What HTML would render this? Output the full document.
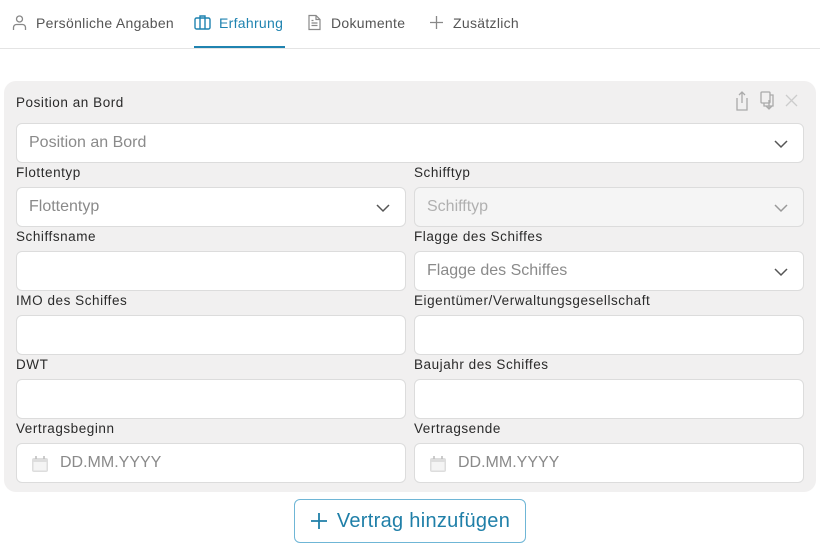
<!DOCTYPE html>
<html><head><meta charset="utf-8"><style>
*{box-sizing:border-box;margin:0;padding:0}
body{width:820px;height:555px;background:#fff;font-family:"Liberation Sans",sans-serif;position:relative;overflow:hidden}
.tabs{position:absolute;left:0;top:0;width:820px;height:49px;border-bottom:1px solid #e4e4e4}
.tab{position:absolute;top:14px;font-size:14px;letter-spacing:0.3px;color:#555;display:flex;align-items:center;gap:8px}
.tab svg{width:17px;height:17px}
.act{color:#1f83b0}
.ul{position:absolute;left:194px;top:46px;width:91px;height:2px;background:#1f83b0}
.card{position:absolute;left:4px;top:81px;width:812px;height:411px;background:#f1f0f0;border-radius:12px}
.lbl{position:absolute;font-size:13.5px;letter-spacing:0.55px;color:#2a2a2a}
.in{position:absolute;height:40px;background:#fff;border:1px solid #dcdcdc;border-radius:6px;font-size:16px;color:#8a8a8a;padding-left:12px;line-height:38px}
.dis{background:#f5f5f5;color:#b0b0b0}
.chev{position:absolute;right:14px;top:12px}
.btn{position:absolute;left:294px;top:499px;width:232px;height:44px;border:1px solid #6fb6d6;border-radius:6px;color:#1f7fa8;font-size:20px;letter-spacing:0.3px;display:flex;align-items:center;justify-content:center;gap:9px}
</style></head><body>
<div class="tabs">
<div class="tab" style="left:11px"><svg viewBox="0 0 17 17" fill="none" stroke="#888" stroke-width="1.3"><circle cx="8.5" cy="5" r="3"/><path d="M2.5 16v-2.5a3 3 0 0 1 3-3h6a3 3 0 0 1 3 3V16"/></svg>Persönliche Angaben</div>
<div class="tab act" style="left:194px"><svg viewBox="0 0 17 17" fill="none" stroke="#1f83b0" stroke-width="1.4"><rect x="1" y="4" width="15" height="11" rx="1.5"/><path d="M6 4V2h5v2M6 4v11M11 4v11"/></svg>Erfahrung</div>
<div class="tab" style="left:306px"><svg viewBox="0 0 17 17" fill="none" stroke="#888" stroke-width="1.2"><path d="M3 1.5h7l4 4v10H3z"/><path d="M10 1.5v4h4M5.5 9h6M5.5 11.5h6M5.5 6.5h2"/></svg>Dokumente</div>
<div class="tab" style="left:428px"><svg viewBox="0 0 17 17" fill="none" stroke="#888" stroke-width="1.3"><path d="M8.5 2v13M2 8.5h13"/></svg>Zusätzlich</div>
<div class="ul"></div>
</div>
<div class="card"></div>
<div class="lbl" style="left:16px;top:95px">Position an Bord</div>
<svg style="position:absolute;left:733px;top:90px" width="70" height="24" viewBox="0 0 70 24" fill="none" stroke="#aaa" stroke-width="1.3"><path d="M4 8v12h10V8M9 2v11M6 5l3-3 3 3"/><rect x="28" y="2" width="9" height="11" rx="1"/><path d="M31 13v3h9V5h-3M36 10v9M33 16l3 3 3-3"/><path d="M53 5l11 11M64 5L53 16" stroke="#ccc"/></svg>
<div class="in" style="left:16px;top:123px;width:788px">Position an Bord<svg class="chev" width="16" height="16" viewBox="0 0 16 16" fill="none" stroke="#555" stroke-width="1.5"><path d="M2 5l6 6 6-6"/></svg></div>
<div class="lbl" style="left:16px;top:165px">Flottentyp</div>
<div class="lbl" style="left:414px;top:165px">Schifftyp</div>
<div class="in" style="left:16px;top:187px;width:390px">Flottentyp<svg class="chev" width="16" height="16" viewBox="0 0 16 16" fill="none" stroke="#555" stroke-width="1.5"><path d="M2 5l6 6 6-6"/></svg></div>
<div class="in dis" style="left:414px;top:187px;width:390px">Schifftyp<svg class="chev" width="16" height="16" viewBox="0 0 16 16" fill="none" stroke="#999" stroke-width="1.5"><path d="M2 5l6 6 6-6"/></svg></div>
<div class="lbl" style="left:16px;top:229px">Schiffsname</div>
<div class="lbl" style="left:414px;top:229px">Flagge des Schiffes</div>
<div class="in" style="left:16px;top:251px;width:390px"></div>
<div class="in" style="left:414px;top:251px;width:390px">Flagge des Schiffes<svg class="chev" width="16" height="16" viewBox="0 0 16 16" fill="none" stroke="#555" stroke-width="1.5"><path d="M2 5l6 6 6-6"/></svg></div>
<div class="lbl" style="left:16px;top:293px">IMO des Schiffes</div>
<div class="lbl" style="left:414px;top:293px">Eigentümer/Verwaltungsgesellschaft</div>
<div class="in" style="left:16px;top:315px;width:390px"></div>
<div class="in" style="left:414px;top:315px;width:390px"></div>
<div class="lbl" style="left:16px;top:357px">DWT</div>
<div class="lbl" style="left:414px;top:357px">Baujahr des Schiffes</div>
<div class="in" style="left:16px;top:379px;width:390px"></div>
<div class="in" style="left:414px;top:379px;width:390px"></div>
<div class="lbl" style="left:16px;top:421px">Vertragsbeginn</div>
<div class="lbl" style="left:414px;top:421px">Vertragsende</div>
<div class="in" style="left:16px;top:443px;width:390px;padding-left:43px"><svg style="position:absolute;left:14px;top:11px" width="18" height="18" viewBox="0 0 18 18"><rect x="1" y="3" width="16" height="14" rx="2" fill="#ddd"/><rect x="2.5" y="7" width="13" height="8.5" fill="#f4f4f4"/><path d="M5 1v3M13 1v3" stroke="#bbb" stroke-width="1.5"/></svg>DD.MM.YYYY</div>
<div class="in" style="left:414px;top:443px;width:390px;padding-left:43px"><svg style="position:absolute;left:14px;top:11px" width="18" height="18" viewBox="0 0 18 18"><rect x="1" y="3" width="16" height="14" rx="2" fill="#ddd"/><rect x="2.5" y="7" width="13" height="8.5" fill="#f4f4f4"/><path d="M5 1v3M13 1v3" stroke="#bbb" stroke-width="1.5"/></svg>DD.MM.YYYY</div>
<div class="btn"><svg width="18" height="18" viewBox="0 0 18 18" stroke="#1f7fa8" stroke-width="1.8"><path d="M9 1v16M1 9h16"/></svg>Vertrag hinzufügen</div>
</body></html>
